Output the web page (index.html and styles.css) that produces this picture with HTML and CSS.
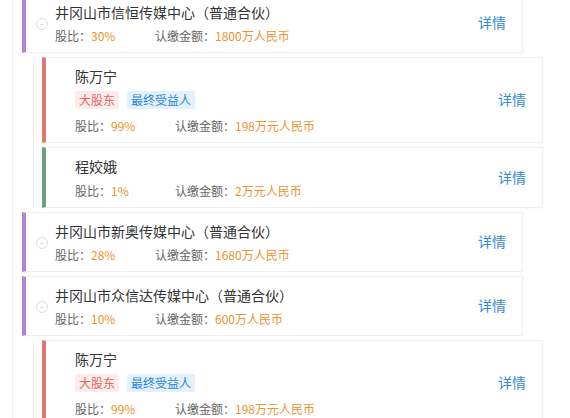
FILE: index.html
```html
<!DOCTYPE html>
<html lang="zh">
<head>
<meta charset="utf-8">
<link rel="stylesheet" href="styles.css">
</head>
<body>
<div class="tree">
  <div class="card l1 purple">
    <span class="toggle"></span>
    <div class="info">
      <div class="name">井冈山市信恒传媒中心（普通合伙）</div>
      <div class="meta"><span class="ratio">股比：<em>30%</em></span><span>认缴金额：<em>1800万人民币</em></span></div>
    </div>
    <a class="detail">详情</a>
  </div>
  <div class="children">
    <div class="card l2 red">
      <div class="info">
        <div class="name">陈万宁</div>
        <div class="tags"><span class="tag tag-red">大股东</span><span class="tag tag-blue">最终受益人</span></div>
        <div class="meta"><span class="ratio">股比：<em>99%</em></span><span>认缴金额：<em>198万元人民币</em></span></div>
      </div>
      <a class="detail">详情</a>
    </div>
    <div class="card l2 green">
      <div class="info">
        <div class="name">程姣娥</div>
        <div class="meta"><span class="ratio">股比：<em>1%</em></span><span>认缴金额：<em>2万元人民币</em></span></div>
      </div>
      <a class="detail">详情</a>
    </div>
  </div>
  <div class="card l1 purple">
    <span class="toggle"></span>
    <div class="info">
      <div class="name">井冈山市新奥传媒中心（普通合伙）</div>
      <div class="meta"><span class="ratio">股比：<em>28%</em></span><span>认缴金额：<em>1680万人民币</em></span></div>
    </div>
    <a class="detail">详情</a>
  </div>
  <div class="card l1 purple">
    <span class="toggle"></span>
    <div class="info">
      <div class="name">井冈山市众信达传媒中心（普通合伙）</div>
      <div class="meta"><span class="ratio">股比：<em>10%</em></span><span>认缴金额：<em>600万人民币</em></span></div>
    </div>
    <a class="detail">详情</a>
  </div>
  <div class="children">
    <div class="card l2 red">
      <div class="info">
        <div class="name">陈万宁</div>
        <div class="tags"><span class="tag tag-red">大股东</span><span class="tag tag-blue">最终受益人</span></div>
        <div class="meta"><span class="ratio">股比：<em>99%</em></span><span>认缴金额：<em>198万元人民币</em></span></div>
      </div>
      <a class="detail">详情</a>
    </div>
  </div>
</div>
</body>
</html>
```

FILE: styles.css
```css
* { box-sizing: border-box; }
html, body {
  margin: 0;
  padding: 0;
  background: #fff;
  overflow: hidden;
  height: 418px;
}
body {
  font-family: "Noto Sans CJK SC", "Noto Sans", sans-serif;
  color: #333;
}
.tree {
  margin: -7px 0 0 12px;
  border-left: 1px solid #f0f0f0;
  padding-left: 9px;
  display: flex;
  flex-direction: column;
  gap: 4px;
}
.children {
  margin-left: 11px;
  border-left: 1px solid #f0f0f0;
  padding-left: 8px;
  display: flex;
  flex-direction: column;
  gap: 4px;
}
.card {
  width: 501px;
  background: #fff;
  border: 1px solid #f0f0f0;
  border-left: 4px solid #b584d2;
  box-shadow: 0 0 3px rgba(0, 0, 0, 0.04);
  display: flex;
  align-items: center;
  padding: 8px 16px 6px 10px;
}
.card.l2 { padding-left: 29px; }
.purple { border-left-color: #b584d2; }
.red { border-left-color: #e0766e; }
.green { border-left-color: #6f9f7c; }
.toggle {
  flex: none;
  width: 12px;
  height: 12px;
  border: 1px solid #dcdcdc;
  border-radius: 50%;
  margin-right: 7px;
  position: relative;
}
.toggle::after {
  content: "";
  position: absolute;
  left: 3px;
  right: 3px;
  top: 5px;
  height: 1px;
  background: #e2e2e2;
}
.info { flex: 1; }
.name {
  font-size: 14px;
  line-height: 20px;
  color: #333;
}
.tags {
  display: flex;
  gap: 8px;
  margin-top: 5px;
}
.tag {
  font-size: 12px;
  line-height: 18px;
  height: 18px;
  padding: 0 4px;
  border-radius: 2px;
}
.tag-red { background: #fdeceb; color: #e06a5f; }
.tag-blue { background: #e4f1fc; color: #2a88d6; }
.meta {
  margin-top: 4px;
  font-size: 12px;
  line-height: 20px;
  color: #666;
  display: flex;
}
.l2 .meta { margin-top: 5px; }
.l2 .tags + .meta { margin-top: 7px; }
.ratio { width: 100px; }
.meta em {
  font-style: normal;
  color: #f0922f;
}
.detail {
  font-size: 14px;
  color: #2f8ad8;
  line-height: 20px;
  margin-bottom: 4px;
  cursor: pointer;
}
```
